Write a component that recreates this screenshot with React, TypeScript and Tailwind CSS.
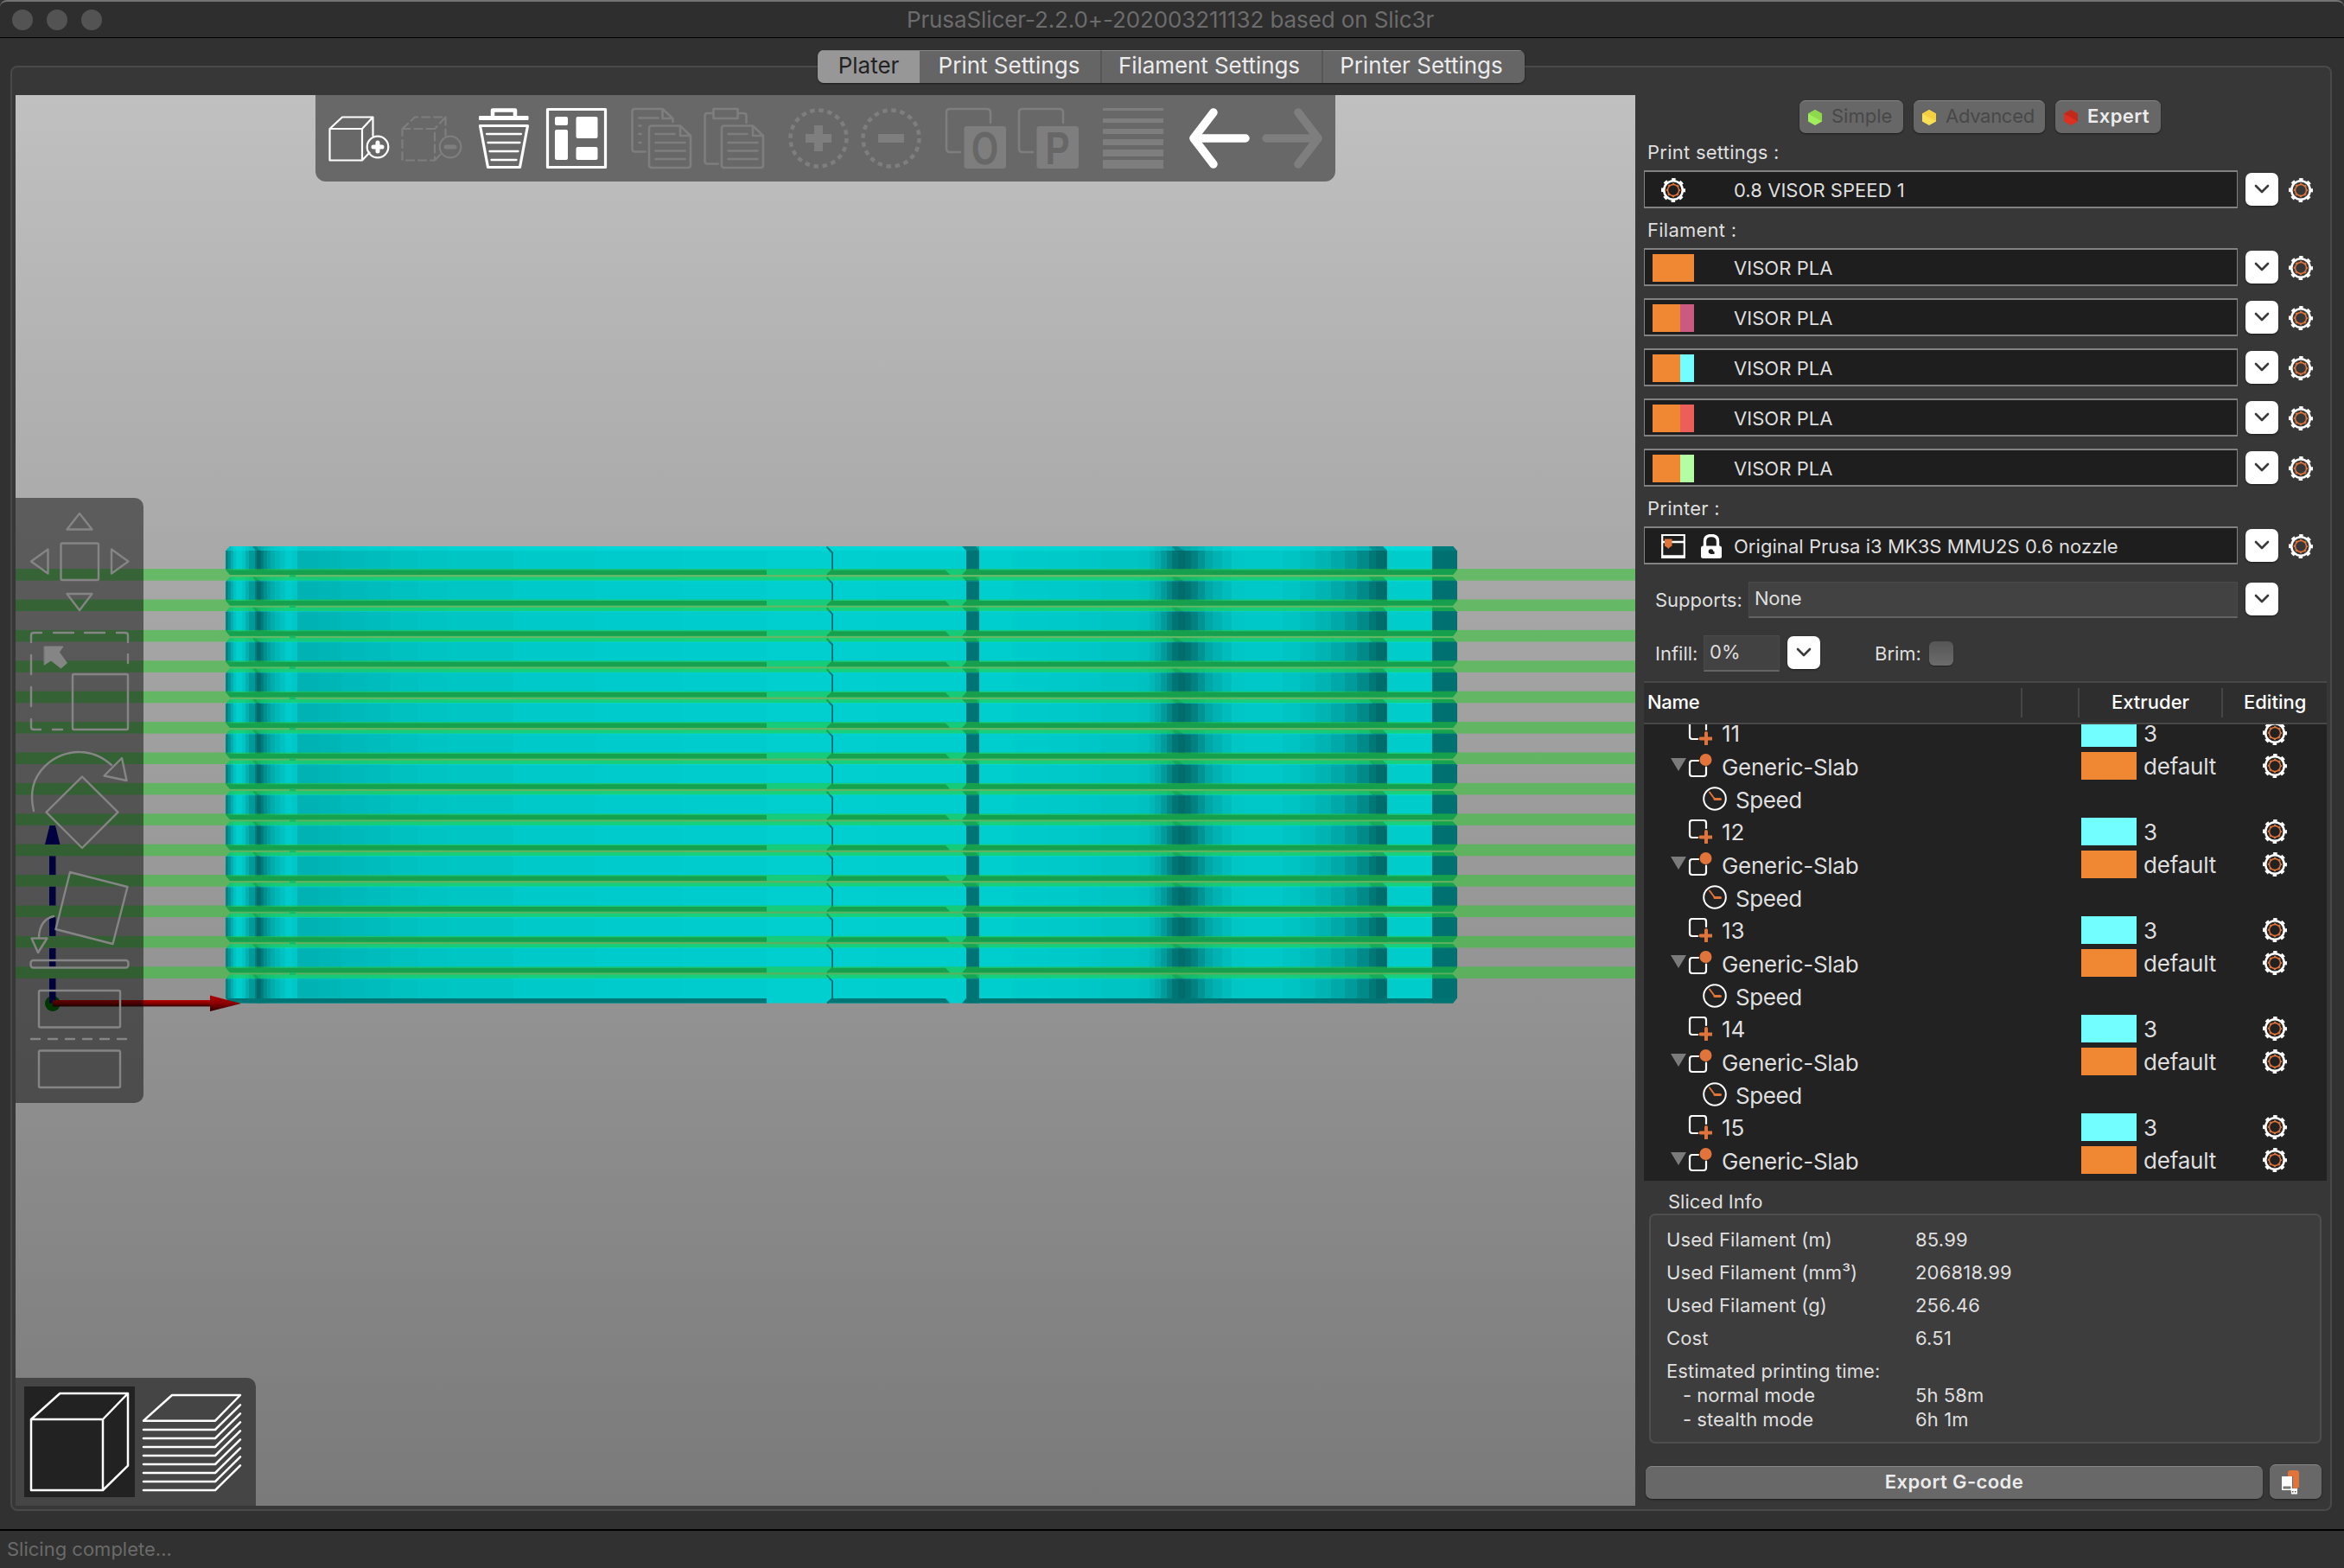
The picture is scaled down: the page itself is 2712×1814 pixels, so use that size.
import React from 'react';

const LAYERS = 15;
const PITCH = 35.4;
const TOP = 632;

/* Horizontal shading facets of one slab: [x start, colour] */
const FACETS: [number, string][] = [
  [261, '#008383'], [264, '#009696'], [267, '#00adad'], [270, '#00c2c3'], [273, '#00cdce'],
  [280, '#00c4c4'], [284, '#00b0b0'], [288, '#009a9a'], [295, '#008080'], [297, '#006b6b'],
  [302, '#007c7c'], [305, '#009090'], [309, '#00a0a0'], [313, '#00acac'], [318, '#00b8b8'],
  [324, '#00c2c2'], [330, '#00cbcc'], [338, '#00c6c6'], [344, '#00b2b3'], [369, '#00b5b5'], [395, '#00b9ba'],
  [425, '#00bcbd'], [452, '#00c0c0'], [484, '#00c3c3'], [518, '#00c5c5'], [594, '#00c9ca'],
  [690, '#00cbcc'], [790, '#00cccd'], [887, '#00cecf'], [1014, '#00cdce'], [1118, '#007475'],
  [1133, '#00cdcd'], [1173, '#00cbcb'], [1212, '#00c9ca'], [1248, '#00c7c7'], [1274, '#00c4c4'],
  [1317, '#00c0c0'], [1330, '#00b8b8'], [1336, '#00adad'], [1343, '#009c9c'], [1350, '#008888'],
  [1356, '#007575'], [1363, '#006c6c'], [1371, '#007474'], [1378, '#008282'], [1386, '#009494'],
  [1394, '#00a7a7'], [1403, '#00b2b2'], [1414, '#00bcbc'], [1425, '#00c6c6'], [1440, '#00c7c8'],
  [1484, '#00c4c4'], [1504, '#00bdbd'], [1522, '#00b4b4'], [1540, '#00a9a9'], [1556, '#009c9c'],
  [1570, '#008a8a'], [1584, '#007878'], [1592, '#006c6c'], [1605, '#00cccc'], [1657, '#007070'], [1686, '#007070'],
];

const X0 = 261;
const X1 = 1686;

function Slab() {
  return (
    <g>
      <polygon points="266,0 1681,0 1686,5.5 1686,27 1681,33 266,33 261,27 261,5.5" fill="url(#facets)" />
      <polygon points="266,0 1605,0 1605,5 261.5,5" fill="#00e2e2" fillOpacity="0.5" />
      <polygon points="1600,0 1657,0 1657,5 1605,5" fill="#00dcdc" />
      <polygon points="1657,0 1681,0 1685.500,5 1657,5" fill="#007a7a" />
      <polygon points="261.500,27.500 887,27.500 887,33 266,33" fill="#007676" />
      <polygon points="963,27.500 1094,27.500 1099,33 957,33" fill="#007676" />
      <polygon points="1118,27.500 1685.500,27.500 1681,33 1113,33" fill="#007373" />
      <polygon points="1113,0 1129,0 1133,5 1118,5" fill="#008383" />
      <polygon points="292,0 296,0 301,5 296,5" fill="#007c7c" fillOpacity="0.8" />
      <polygon points="1356,0 1362,0 1370,5 1360,5" fill="#007c7c" fillOpacity="0.7" />
      <polygon points="1584,0 1600,0 1605,5 1588,5" fill="#008080" fillOpacity="0.7" />
      <path d="M956.500 0.500l6.500 7v20l-6 5.500" stroke="#007474" strokeWidth="2" fill="none" />
    </g>
  );
}

function Scene() {
  const idx = Array.from({ length: LAYERS }, (_, i) => i);
  return (
    <svg className="block h-full w-full" viewBox="18 110 1874 1632" preserveAspectRatio="none">
      <defs>
        <linearGradient id="facets" gradientUnits="userSpaceOnUse" x1={X0} y1="0" x2={X1} y2="0">
          {FACETS.slice(0, -1).flatMap(([x, c], i) => [
            <stop key={`a${x}`} offset={(x - X0) / (X1 - X0)} stopColor={c} />,
            <stop key={`b${x}`} offset={(FACETS[i + 1][0] - X0) / (X1 - X0)} stopColor={c} />,
          ])}
        </linearGradient>
        <linearGradient id="redAxis" x1="0" y1="0" x2="0" y2="1">
          <stop offset="0" stopColor="#b40000" />
          <stop offset="0.5" stopColor="#8a0000" />
          <stop offset="1" stopColor="#2e0000" />
        </linearGradient>
      </defs>
      {idx.map((i) => (
        <g key={i} transform={`translate(0 ${TOP + i * PITCH})`}>
          <Slab />
        </g>
      ))}
      {idx.slice(1).map((i) => (
        <rect key={i} x="335" width="7" y={TOP + i * PITCH - 2.6} height="2.8" fill="#00a8a8" />
      ))}
      {idx.slice(0, -1).map((i) => (
        <rect key={i} x="18" width="1874" y={TOP + 26.1 + i * PITCH} height="13.5" fill="rgb(42,201,42)" fillOpacity="0.52" />
      ))}
      <circle cx="61" cy="1161" r="9" fill="#006600" />
      <polygon points="57.5,955 64,955 69.5,977 52,977" fill="#000078" />
      {[990.4, 1025.8, 1061.2, 1097].map((y) => (
        <rect key={y} x="57" y={y} width="7.5" height="21.7" fill="#000070" />
      ))}
      <rect x="57" y="1132" width="7.5" height="28.5" fill="#000070" />
      <rect x="61" y="1157" width="183" height="7.4" fill="url(#redAxis)" />
      <polygon points="243,1151.5 279,1161 243,1170" fill="url(#redAxis)" />
    </svg>
  );
}

const ON = '#ffffff';
const OFF = '#7e7e7e';

function Ico({ children }: { children: React.ReactNode }) {
  return (
    <svg className="block size-[70px] shrink-0 overflow-visible" viewBox="0 0 70 70" fill="none" strokeLinejoin="round" strokeLinecap="round">
      {children}
    </svg>
  );
}

function MainToolbar() {
  return (
    <div className="absolute left-[347px] top-0 flex h-[100px] w-[1180px] rounded-b-xl bg-[#686868] pl-[15px] pt-[15px]">
      <div className="flex gap-[14px]">
        <Ico>
          <g stroke={ON} strokeWidth="2.2">
            <path d="M1.500 24h37.500v36.500h-37.500zM1.500 24L16 10.500h35.500L39 24M51.500 10.500V32M39 60.500l8.500-9" />
            <circle cx="57" cy="45" r="12.300" />
          </g>
          <path d="M57 40v10M52 45h10" stroke={ON} strokeWidth="5" />
        </Ico>
        <Ico>
          <g stroke={OFF} strokeWidth="2.2">
            <path strokeDasharray="9 5" d="M1.500 24h37.500v36.500h-37.500zM1.500 24L16 10.500h35.500L39 24M51.500 10.500V32M39 60.500l8.500-9" />
            <circle cx="57" cy="45" r="12.300" />
          </g>
          <path d="M52 45h10" stroke={OFF} strokeWidth="5" />
        </Ico>
        <Ico>
          <path d="M22 9V2.500h26V9" stroke={ON} strokeWidth="4.500" />
          <path d="M7 9.500h56v4H7z" fill={ON} stroke={ON} strokeWidth="1" />
          <path d="M7.500 20.500h55L53.500 68.500h-37z" stroke={ON} strokeWidth="3.200" />
          <path d="M15 30h40M16.500 40h37M18.500 50h33M20.500 60h29" stroke={ON} strokeWidth="2.300" />
        </Ico>
        <Ico>
          <rect x="1.500" y="1.500" width="67" height="67" stroke={ON} strokeWidth="3.200" />
          <g fill={ON}>
            <rect x="10" y="10" width="15" height="10" rx="2" />
            <rect x="10" y="25" width="15" height="35" rx="2" />
            <rect x="34.500" y="10" width="25" height="25" rx="2" />
            <rect x="34.500" y="45" width="25" height="15" rx="2" />
          </g>
        </Ico>
      </div>
      <div className="ml-7 flex gap-[14px]">
        <Ico>
          <g stroke={OFF} strokeWidth="2.6" transform="translate(-3.500 0)">
            <path d="M20 50.500h-12q-3 0-3-3V4q0-3 3-3h32l12 11v4M40 1v11h12M13 11.500h22M13 20.500h2M13 30h2M13 40h2" />
            <path d="M27.500 20.500h33l12 11.500v34q0 3-3 3H27.500q-3 0-3-3V23.500q0-3 3-3zM60.500 20.500v11.500h12M32 30h22M32 40h34M32 49.500h34M32 59h34" />
          </g>
        </Ico>
        <Ico>
          <g stroke={OFF} strokeWidth="2.6" transform="translate(-3.500 0)">
            <path d="M20 64.500h-12q-3 0-3-3V9q0-3 3-3h7M43 6h7q3 0 3 3v8M15 1h28v11H15z" />
            <path d="M27.500 20.500h33l12 11.500v34q0 3-3 3H27.500q-3 0-3-3V23.500q0-3 3-3zM60.500 20.500v11.500h12M32 30h22M32 40h34M32 49.500h34M32 59h34" />
          </g>
        </Ico>
      </div>
      <div className="ml-7 flex gap-[14px]">
        <Ico>
          <circle cx="35" cy="35" r="32.500" stroke={OFF} strokeWidth="4.500" strokeLinecap="butt" strokeDasharray="5.500 4.710" />
          <path d="M35 20v30M20 35h30" stroke={OFF} strokeWidth="10" strokeLinecap="butt" />
        </Ico>
        <Ico>
          <circle cx="35" cy="35" r="32.500" stroke={OFF} strokeWidth="4.500" strokeLinecap="butt" strokeDasharray="5.500 4.710" />
          <path d="M20 35h30" stroke={OFF} strokeWidth="10" strokeLinecap="butt" />
        </Ico>
      </div>
      <div className="ml-7 flex gap-[14px]">
        {['O', 'P'].map((c) => (
          <Ico key={c}>
            <path d="M17 51H5q-4 0-4-4V5q0-4 4-4h43q4 0 4 4v12" stroke={OFF} strokeWidth="2.6" />
            <rect x="21.500" y="21" width="48.500" height="49" rx="3" fill={OFF} />
            <text
              transform={c === 'O' ? 'translate(45.500 65) scale(0.74 1)' : 'translate(45.500 65) scale(0.78 1)'}
              textAnchor="middle"
              fontFamily="Liberation Sans"
              fontWeight="700"
              fontSize="54"
              fill="#676767"
            >
              {c}
            </text>
          </Ico>
        ))}
      </div>
      <div className="ml-7">
        <Ico>
          <g fill={OFF}>
            <rect y="0" width="70" height="3" />
            <rect y="12" width="70" height="5" />
            <rect y="24" width="70" height="6" />
            <rect y="36" width="70" height="7" />
            <rect y="48" width="70" height="8" />
            <rect y="60" width="70" height="10" />
          </g>
        </Ico>
      </div>
      <div className="ml-[30px] flex gap-[14px]">
        <Ico>
          <path d="M65 35H8M28 5L5 35l23 30" stroke={ON} strokeWidth="9.500" />
        </Ico>
        <Ico>
          <path d="M5 35h57M42 5l23 30-23 30" stroke={OFF} strokeWidth="9.500" />
        </Ico>
      </div>
    </div>
  );
}

function GizmoBar() {
  return (
    <div className="absolute left-0 top-[466px] h-[700px] w-[148px] rounded-r-[10px] bg-black/[0.46]">
      <svg className="block h-full w-full" viewBox="18 576 148 700" fill="none" stroke="#858585" strokeWidth="2.4" strokeLinecap="round" strokeLinejoin="round">
        {/* move */}
        <path d="M92 594l14.500 18.500h-29zM92 706l14.500-19h-29zM36 649.500l19.500-14v28zM148.500 649.500l-19.500-14v28z" />
        <rect x="70.500" y="628.500" width="43.500" height="42.500" rx="1.500" />
        {/* scale */}
        <path d="M36 743v-8q0-3 3-3h9M62 732h23M98 732h23M135 732h10q3 0 3 3v8M148 757v10M36 758v22M36 795v22M36 832v9q0 3 3 3h8M61 844h11" />
        <rect x="84" y="780" width="64" height="64" rx="1.500" />
        <path d="M51.500 748h21.500l-4.500 6.500L77.500 767l-7 6L59 764l-7.500 5z" fill="#858585" stroke="#858585" strokeWidth="1" />
        {/* rotate */}
        <path d="M39 938C28 892 67 869 92 870q20 0 37 15M141 877l5.500 26-26-5.500z" />
        <path d="M95 898.500l41.500 41.200L95 981l-41.500-41.300z" />
        {/* place on face */}
        <path d="M81 1009l66.500 17-17 66-66-17z" />
        <path d="M62 1060q-16 4-17 24M36.500 1085.500h18l-10.500 16.500z" />
        <rect x="35.500" y="1111" width="113" height="8.500" rx="3" />
        {/* cut */}
        <rect x="45" y="1146" width="94" height="42.500" rx="1.500" />
        <path d="M36 1202h10M56 1202h10M76 1202h10M96 1202h10M116 1202h10M136 1202h10" />
        <rect x="45" y="1215.500" width="94" height="42.500" rx="1.500" />
      </svg>
    </div>
  );
}

function ViewBar() {
  return (
    <div className="absolute bottom-0 left-0 flex h-[148px] w-[278px] gap-0 rounded-tr-[10px] bg-[#454545] px-[10px] pt-[10px]">
      <div className="size-[128px] bg-[#222222]">
        <svg className="block size-[128px]" viewBox="84 102 384 384" fill="none" stroke="#fff" strokeWidth="7.500" strokeLinejoin="round" strokeLinecap="round">
          <path d="M108 216h249v246H108zM108 216L208 126h236L357 216M444 126v251L357 462" />
        </svg>
      </div>
      <svg className="block size-[128px]" viewBox="468 102 384 384" fill="none" stroke="#fff" strokeWidth="7.500" strokeLinejoin="round" strokeLinecap="round">
        <path d="M498 221L597 132h237L747 221z" />
        {[0, 1, 2, 3, 4, 5, 6, 7].map((i) => (
          <path key={i} d={`M498 ${252 + i * 30}h249l87-86`} />
        ))}
      </svg>
    </div>
  );
}

function Gear() {
  return (
    <svg className="block size-7 shrink-0" viewBox="-14 -14 28 28" fill="none">
      <circle r="10.800" stroke="#fff" strokeWidth="2.6" />
      <circle r="12.700" stroke="#fff" strokeWidth="2.6" strokeDasharray="4.600 5.375" strokeDashoffset="2.300" />
      <circle r="6.500" stroke="#e0743a" strokeWidth="1.500" />
      <circle r="7.500" stroke="#e0743a" strokeWidth="1.400" strokeDasharray="2.300 3.590" strokeDashoffset="1.150" />
    </svg>
  );
}

function DropButton() {
  return (
    <div className="flex h-[38px] w-[38px] shrink-0 items-center justify-center rounded-[7px] bg-white shadow-[0_1px_2px_rgba(0,0,0,0.5)]">
      <svg className="block h-[12px] w-[18px]" viewBox="0 0 18 12" fill="none" stroke="#3a3a3a" strokeWidth="2.600" strokeLinecap="round" strokeLinejoin="round">
        <path d="M2 2l7 7 7-7" />
      </svg>
    </div>
  );
}

function Combo({ icon, label, className = '' }: { icon: React.ReactNode; label: string; className?: string }) {
  return (
    <div className={`flex h-[44px] items-center ${className}`}>
      <div className="flex h-[44px] w-[687px] items-center border-2 border-x border-[#828282] bg-[#1e1e1e]">
        <div className="flex w-[103px] items-center pl-[9px]">{icon}</div>
        <span className="mt-[2px] text-[22px] leading-none tracking-[0.05px]">{label}</span>
      </div>
      <div className="ml-[9px]">
        <DropButton />
      </div>
      <div className="ml-3 mt-[2px]">
        <Gear />
      </div>
    </div>
  );
}

function Swatch({ right }: { right: string }) {
  return (
    <div className="mt-[2px] flex h-8 w-12 bg-[#f08833]">
      <div className={`ml-auto h-8 w-4 ${right}`} />
    </div>
  );
}

const FILAMENTS = ['bg-[#f08833]', 'bg-[#cc5a80]', 'bg-[#72feff]', 'bg-[#ec5e58]', 'bg-[#b3fea4]'];

function PrinterIcon() {
  return (
    <div className="mt-[2px] flex items-center">
      <svg className="ml-[10px] block size-7" viewBox="0 0 28 28" fill="none">
        <path d="M1.200 1h25.600v26H1.200z" stroke="#fff" strokeWidth="2.200" />
        <path d="M1 9h26M1 25.500h26" stroke="#fff" strokeWidth="2.400" />
        <path d="M4 5.500h8.500v8l-3 2-1.200 1.500-1.300-1.500-3-2z" fill="#e0743a" />
      </svg>
      <svg className="ml-[17px] block h-7 w-[26px]" viewBox="0 0 26 28" fill="none">
        <path d="M5.500 14V8q0-6.500 7.500-6.500T20.500 8v6" stroke="#fff" strokeWidth="3.400" />
        <rect x="1" y="13.500" width="24" height="14.500" rx="2.500" fill="#fff" />
        <circle cx="12.500" cy="20" r="2.800" fill="#1e1e1e" />
        <rect x="12" y="20" width="4.500" height="3" fill="#1e1e1e" />
      </svg>
    </div>
  );
}

function Mode({ label, a, b, cls }: { label: string; a: string; b: string; cls: string }) {
  return (
    <div className={`flex h-[38px] items-center rounded-[7px] border-t border-[#868686] bg-[#676767] pl-[10px] text-[22px] leading-none shadow-[0_1px_2px_rgba(0,0,0,0.5)] ${cls}`}>
      <svg className="mr-[11px] block h-[18px] w-4" viewBox="0 0 16 18">
        <path d="M8 0l8 4.500v9L8 18l-8-4.500v-9z" fill={a} />
        <path d="M8 0l8 4.500v9L0 4.500z" fill={b} />
      </svg>
      <span className="-mt-[3px]">{label}</span>
    </div>
  );
}

function Tree() {
  const rows: { kind: 'part' | 'object' | 'speed'; name: string }[] = [];
  for (const n of [11, 12, 13, 14, 15]) {
    rows.push({ kind: 'part', name: String(n) }, { kind: 'object', name: 'Generic-Slab' }, { kind: 'speed', name: 'Speed' });
  }
  rows.pop();
  return (
    <div className="mt-[11px] flex h-[578px] w-[790px] flex-col overflow-hidden bg-[#222222]">
      <div className="flex h-[50px] shrink-0 items-center border-y-2 border-[#484848] bg-[#2e2e2e] text-[22px] font-medium leading-none text-white">
        <div className="-mt-[2px] w-[436px] pl-1 tracking-[-0.3px]">Name</div>
        <div className="h-[34px] w-[66px] border-l-2 border-[#464646]" />
        <div className="flex h-[34px] w-[166px] items-center justify-center border-l-2 border-[#464646] pb-[2px]">Extruder</div>
        <div className="flex h-[34px] flex-1 items-center border-l-2 border-[#464646] pb-[2px] pl-6">Editing</div>
      </div>
      <div className="-mt-[9px] flex flex-col [clip-path:inset(9px_0_0_0)]">
        {rows.map((r, i) => (
          <div key={i} className="flex h-[38px] shrink-0 items-center text-[26px] leading-none">
            <div className="flex w-[506px] items-center">
              {r.kind === 'object' && (
                <>
                  <svg className="mb-1 ml-[31px] block h-[15px] w-[18px]" viewBox="0 0 18 15">
                    <path d="M0 0h18L9 15z" fill="#7b7b7b" />
                  </svg>
                  <svg className="ml-[2px] mr-[11px] block size-7" viewBox="0 0 28 28" fill="none">
                    <path d="M12 8H5q-3 0-3 3v12q0 3 3 3h13q3 0 3-3v-7.500" stroke="#fff" strokeWidth="2.200" strokeLinecap="round" />
                    <circle cx="20.500" cy="7" r="7" fill="#e0743a" />
                  </svg>
                  <span className="mt-[3px] tracking-[-0.3px]">{r.name}</span>
                </>
              )}
              {r.kind === 'part' && (
                <>
                  <svg className="ml-[51px] mr-[11px] block size-7" viewBox="0 0 28 28" fill="none">
                    <path d="M11 21H5q-3 0-3-3V4q0-3 3-3h13q3 0 3 3v6" stroke="#fff" strokeWidth="2.200" strokeLinecap="round" />
                    <path d="M21 14v13M14.500 20.500h13" stroke="#e0743a" strokeWidth="4" strokeLinecap="round" />
                  </svg>
                  <span className="mt-[2px]">{r.name}</span>
                </>
              )}
              {r.kind === 'speed' && (
                <>
                  <svg className="ml-[68px] mr-[10px] block size-7" viewBox="0 0 28 28" fill="none" strokeLinecap="round">
                    <circle cx="14" cy="14" r="12.800" stroke="#fff" strokeWidth="2" />
                    <path d="M8 6.500l6 8" stroke="#e0743a" strokeWidth="2" />
                    <path d="M14 14.500h6.500" stroke="#e0743a" strokeWidth="3" />
                  </svg>
                  <span className="mt-[3px] tracking-[-0.4px]">{r.name}</span>
                </>
              )}
            </div>
            {r.kind !== 'speed' && (
              <>
                <div className={`h-8 w-16 ${r.kind === 'part' ? 'bg-[#72feff]' : 'bg-[#f08833]'}`} />
                <span className="mt-[2px] w-[146px] pl-2 tracking-[-0.2px]">{r.kind === 'part' ? '3' : 'default'}</span>
                <Gear />
              </>
            )}
          </div>
        ))}
      </div>
    </div>
  );
}

const INFO: [string, string][] = [
  ['Used Filament (m)', '85.99'],
  ['Used Filament (mm³)', '206818.99'],
  ['Used Filament (g)', '256.46'],
  ['Cost', '6.51'],
  ['Estimated printing time:', ''],
];
const TIMES: [string, string][] = [
  ['- normal mode', '5h 58m'],
  ['- stealth mode', '6h 1m'],
];

function Sidebar() {
  return (
    <div className="flex w-[804px] flex-col pl-[10px] text-[22px] text-[#dfdfdf]">
      <div className="ml-[180px] mt-[6px] flex gap-3">
        <Mode label="Simple" a="#a2ef5c" b="#8ed84c" cls="w-[120px] text-[#484848]" />
        <Mode label="Advanced" a="#fbdf54" b="#f4cf42" cls="w-[152px] tracking-[-0.3px] text-[#484848]" />
        <Mode label="Expert" a="#dc3020" b="#c02a1c" cls="w-[122px] font-semibold tracking-[0.4px] text-[#ececec]" />
      </div>
      <div className="ml-1 mt-2 h-7 leading-7 tracking-[0.25px]">Print settings :</div>
      <Combo className="mt-[7px]" label="0.8 VISOR SPEED 1" icon={<div className="ml-[10px] mt-[2px]"><Gear /></div>} />
      <div className="ml-1 mt-[11px] h-7 leading-7 tracking-[0.25px]">Filament :</div>
      <div className="mt-[7px] flex flex-col gap-[14px]">
        {FILAMENTS.map((c) => (
          <Combo key={c} label="VISOR PLA" icon={<Swatch right={c} />} />
        ))}
      </div>
      <div className="ml-1 mt-[11px] h-7 leading-7 tracking-[0.25px]">Printer :</div>
      <Combo className="mt-[7px]" label="Original Prusa i3 MK3S MMU2S 0.6 nozzle" icon={<PrinterIcon />} />

      <div className="mt-5 flex h-[42px] items-center pl-[13px]">
        <div className="w-[108px] whitespace-nowrap">Supports:</div>
        <div className="h-[42px] w-[566px] border border-b-2 border-[#4a4a4a] border-b-[#646464] bg-[#424242] pl-[6px] leading-[37px] tracking-[-0.3px]">None</div>
        <div className="-mt-[2px] ml-[9px]">
          <DropButton />
        </div>
      </div>
      <div className="mt-5 flex h-[42px] items-center pl-[13px]">
        <div className="w-[56px] whitespace-nowrap">Infill:</div>
        <div className="h-[42px] w-[88px] border border-b-2 border-[#4a4a4a] border-b-[#646464] bg-[#424242] pl-[6px] leading-[37px]">0%</div>
        <div className="-mt-[2px] ml-[9px]">
          <DropButton />
        </div>
        <div className="ml-[63px] w-[63px]">Brim:</div>
        <div className="size-7 rounded-md bg-linear-to-b from-[#565656] to-[#6c6c6c] shadow-[0_1px_1px_rgba(0,0,0,0.4)]" />
      </div>

      <Tree />

      <div className="ml-7 mt-[10px] h-7 leading-7">Sliced Info</div>
      <div className="ml-[6px] flex h-[266px] w-[778px] flex-col rounded-[7px] border-2 border-[#4e4e4e] bg-[#3d3d3d] pl-[18px] pt-[9px]">
        {INFO.map(([k, v]) => (
          <div key={k} className="flex h-[38px] items-center leading-none">
            <span className="w-[288px] tracking-[0.1px]">{k}</span>
            <span className="tracking-[0.2px]">{v}</span>
          </div>
        ))}
        <div className="-mt-[5px] flex flex-col">
          {TIMES.map(([k, v]) => (
            <div key={k} className="flex h-7 items-center pl-[19px] leading-none">
              <span className="w-[269px]">{k}</span>
              <span className="tracking-[0.1px]">{v}</span>
            </div>
          ))}
        </div>
      </div>

      <div className="mt-6 flex items-end pl-[2px]">
        <div className="flex h-[38px] w-[714px] items-center justify-center rounded-[7px] border-t border-[#868686] bg-[#686868] pb-[3px] font-semibold leading-none tracking-[0.4px] text-[#ececec] shadow-[0_1px_2px_rgba(0,0,0,0.5)]">
          Export G-code
        </div>
        <div className="ml-2 h-10 w-[60px] rounded-[7px] border-t border-[#868686] bg-[#686868] pl-[14px] pt-[6px] shadow-[0_1px_2px_rgba(0,0,0,0.5)]">
          <svg className="block h-7 w-[21px]" viewBox="0 0 21 28">
            <path d="M10 0h7q3 0 3 3v15q0 3-3 3h-4V7H7V3q0-3 3-3z" fill="#e0743a" />
            <rect y="7" width="12" height="16" rx="0.500" fill="#fff" />
            <rect x="1.500" y="18.500" width="9" height="3" fill="#777" />
            <path d="M10.500 21h7.500v6.500h-7z" fill="#fff" />
            <path d="M12 24h1.500v1.500H12zM15 24h1.500v1.500H15z" fill="#555" />
          </svg>
        </div>
      </div>
    </div>
  );
}

const TABS: [string, string][] = [
  ['Plater', 'w-[118px] bg-[#979797] text-[#222222]'],
  ['Print Settings', 'w-[209px] bg-[#656565] pr-[2px] text-[#ececec]'],
  ['Filament Settings', 'w-[256px] border-l-2 border-l-[#565656] bg-[#656565] pr-[6px] tracking-[-0.08px] text-[#ececec]'],
  ['Printer Settings', 'w-[235px] border-l-2 border-l-[#565656] bg-[#656565] pr-[6px] text-[#ececec]'],
];

export default function App() {
  return (
    <div className="flex h-[1814px] w-[2712px] flex-col overflow-hidden bg-[#313131] font-['Inter',sans-serif]">
      <header className="flex h-[44px] shrink-0 items-center rounded-t-[8px] border-b border-t-2 border-b-black border-t-[#747474] bg-[#2e2e2e]">
        <div className="flex gap-4 pl-[14px]">
          <div className="size-6 rounded-full bg-[#535353]" />
          <div className="size-6 rounded-full bg-[#535353]" />
          <div className="size-6 rounded-full bg-[#535353]" />
        </div>
        <div className="mr-[122px] flex-1 text-center text-[26px] leading-none tracking-[-0.1px] text-[#6c6c6c]">
          PrusaSlicer-2.2.0+-202003211132 based on Slic3r
        </div>
      </header>

      <div className="flex min-h-0 flex-1 flex-col items-center pt-[14px]">
        <div className="z-10 -mb-5 mr-[2px] flex h-[38px] overflow-hidden rounded-[7px] text-[26px] leading-none shadow-[0_1px_2px_rgba(0,0,0,0.5)]">
          {TABS.map(([t, c]) => (
            <div key={t} className={`flex h-[38px] items-center justify-center border-t border-t-[#8a8a8a] pb-[3px] ${c}`}>
              {t}
            </div>
          ))}
        </div>
        <div className="ml-[12px] mr-[14px] flex h-[1672px] w-[2686px] rounded-[8px] border-2 border-[#494949] bg-[#373737] pl-1 pt-8">
          <div className="relative h-[1632px] w-[1874px] shrink-0 overflow-hidden bg-linear-to-b from-[#c0c0c0] to-[#7a7a7a]">
            <Scene />
            <MainToolbar />
            <GizmoBar />
            <ViewBar />
          </div>
          <Sidebar />
        </div>
      </div>

      <footer className="flex h-[45px] shrink-0 items-center border-t-2 border-black bg-[#313131] pb-[2px] pl-2 text-[22px] leading-none text-[#6a6a6a]">
        Slicing complete...
      </footer>
    </div>
  );
}
